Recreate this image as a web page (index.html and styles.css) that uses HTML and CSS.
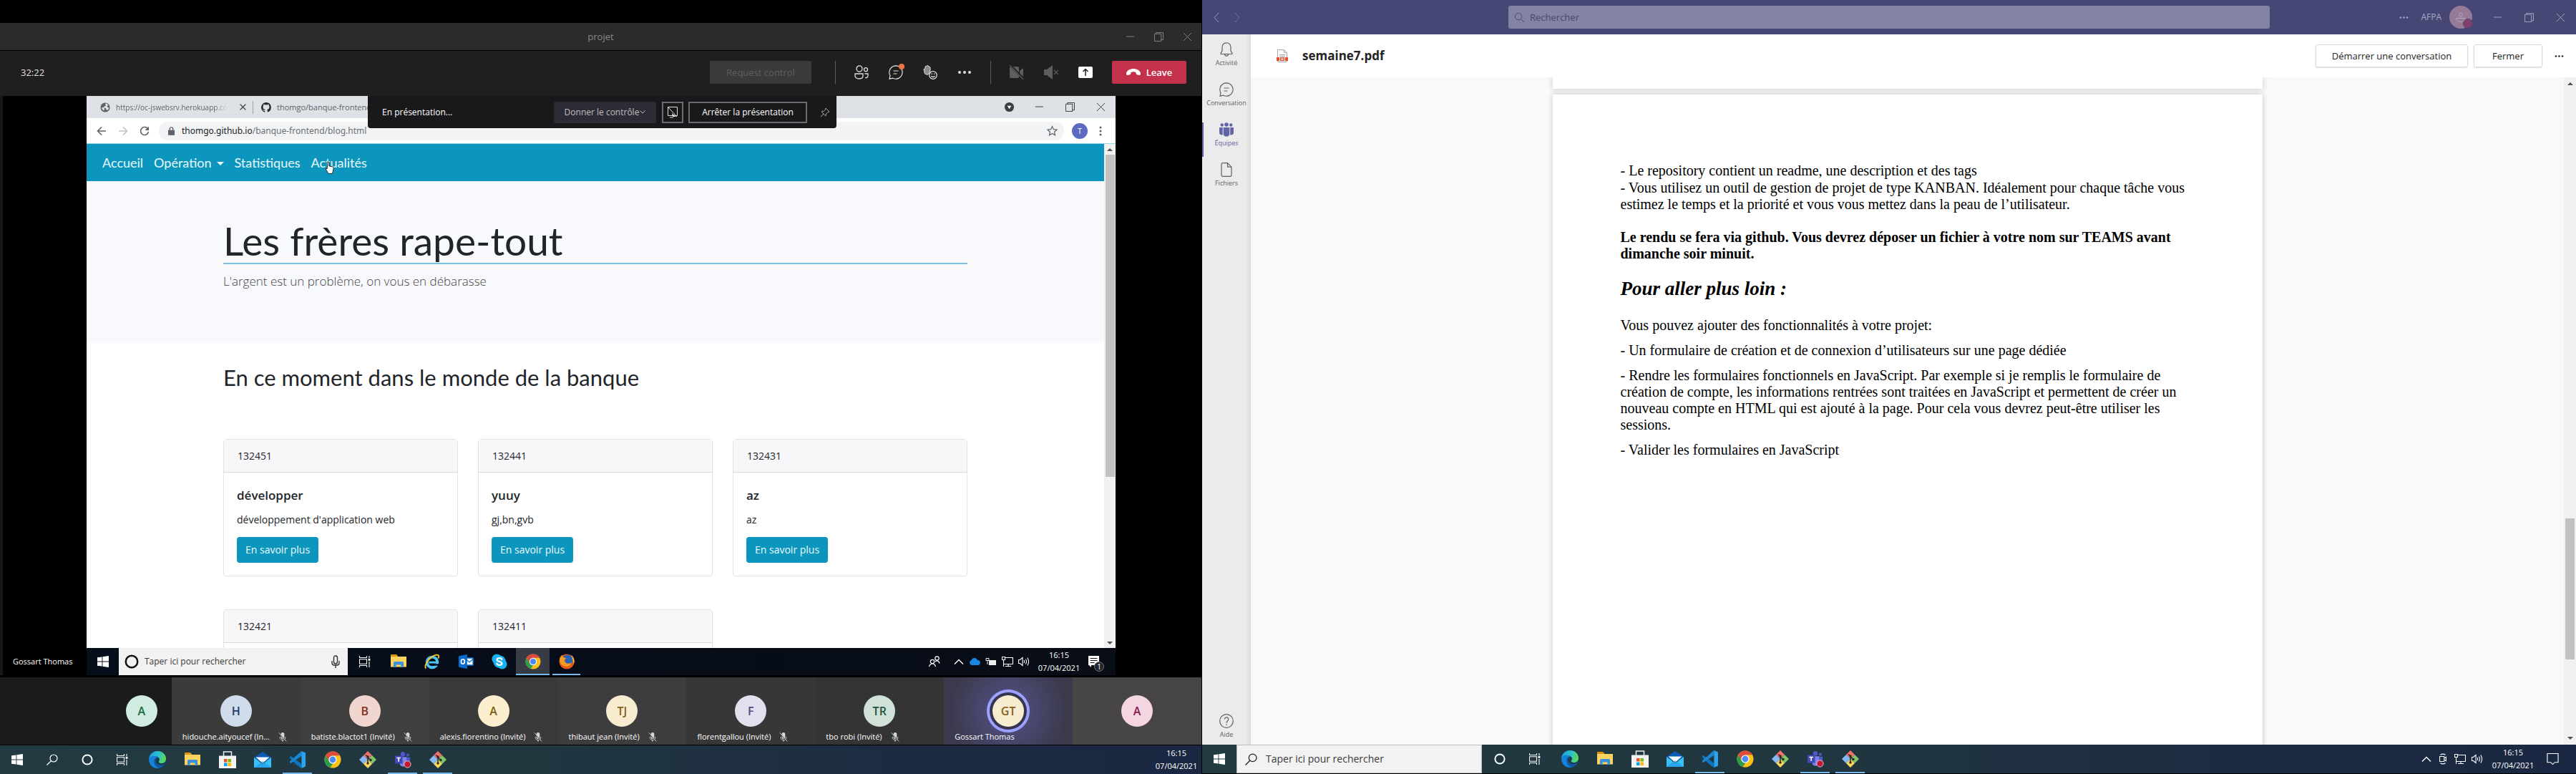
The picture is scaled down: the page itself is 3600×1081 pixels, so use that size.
FILE: index.html
```html
<!DOCTYPE html>
<html lang="fr">
<head>
<meta charset="utf-8">
<title>projet – semaine7.pdf</title>
<link rel="stylesheet" href="styles.css">
</head>
<body>
<svg class="defs" aria-hidden="true">
  <symbol id="i-win" viewBox="0 0 16 16"><path fill="currentColor" d="M0 2.3 6.5 1.4v6.2H0zM7.4 1.2 16 0v7.6H7.4zM0 8.4h6.5v6.2L0 13.7zM7.4 8.4H16V16l-8.6-1.2z"/></symbol>
  <symbol id="i-search" viewBox="0 0 16 16"><circle cx="10" cy="6" r="5" fill="none" stroke="currentColor" stroke-width="1.2"/><path d="M6.4 9.6.5 15.5" stroke="currentColor" stroke-width="1.3"/></symbol>
  <symbol id="i-find" viewBox="0 0 16 16"><circle cx="6.5" cy="6.5" r="5" fill="none" stroke="currentColor"/><path d="M10.2 10.2 15 15" stroke="currentColor"/></symbol>
  <symbol id="i-cortana" viewBox="0 0 16 16"><circle cx="8" cy="8" r="6.6" fill="none" stroke="currentColor" stroke-width="2"/></symbol>
  <symbol id="i-task" viewBox="0 0 16 16"><path fill="none" stroke="currentColor" stroke-width="1.1" d="M.5 0v2.5h10V0M.5 4.8h10v6.4H.5zM.5 16v-2.5h10V16M14 0v3M14 8v8"/><path fill="currentColor" d="M12.6 3.8h2.8v3h-2.8z"/></symbol>
  <symbol id="i-edge" viewBox="0 0 24 24"><defs><linearGradient id="eg" x1="0" x2="1" y1=".2" y2=".4"><stop stop-color="#1b9de2"/><stop offset=".6" stop-color="#2fc2c8"/><stop offset="1" stop-color="#5fdb4b"/></linearGradient></defs><circle cx="12" cy="12" r="12" fill="#0f59a4"/><path fill="url(#eg)" d="M0 11C1 4 6 0 12 0c7 0 12 5 12 10.500 0 4-3 6.500-6.500 6.500-2.500 0-4-1-4-2 0-.8 1.300-1.500 1.300-3.500C14.800 9 12 7 8.500 7 4 7 1 9 0 11z"/><path fill="#1683d8" d="M0 11c1.200-2.800 4.500-4 8.500-4 1.500 0 3 .4 4 1.200C9 8.500 7.200 11 7.200 14c0 4.500 3 8.200 7 9.700C6 25 0 19 0 11z"/><path fill="#213840" d="M12.500 9c1.400.3 2.300 1.400 2.300 2.800 0 1.800-1.300 2.400-1.300 3.200 0 1 1.500 2.200 4 2.200 3 0 4.500-1 5.500-2-1 3-3 4-5.500 4-2.500 0-8-.5-8-6 0-2 1.300-3.800 3-4.200z"/></symbol>
  <symbol id="i-folder" viewBox="0 0 22 20"><path fill="#d9930f" d="M0 0h8l2 2v3H0z"/><path fill="#fbd35f" d="M0 3h22v14.500H0z"/><path fill="#3d8fdb" d="M4 18V11.500q0-1.500 1.500-1.500h11q1.500 0 1.500 1.500V18h-3.500v-3.500h-7V18z"/></symbol>
  <symbol id="i-store" viewBox="0 0 24 24"><path fill="none" stroke="#eee" stroke-width="1.500" d="M6.500 7V1h11v6"/><path fill="#f3f3f3" d="M0 6.500h24V24H0z"/><path fill="#f25022" d="M7 11h4.500v4.500H7z"/><path fill="#7fba00" d="M12.500 11H17v4.500h-4.500z"/><path fill="#00a4ef" d="M7 16.500h4.500V21H7z"/><path fill="#ffb900" d="M12.500 16.500H17V21h-4.500z"/></symbol>
  <symbol id="i-mail" viewBox="0 0 24 22"><path fill="#0b5cb8" d="M0 8 12 0l12 8v5H0z"/><path fill="#37c2f7" d="M0 8v14h24V8L12 17z"/><path fill="#f4f9fd" d="M2.500 7.500h19L12 16z"/><path fill="#1c93e6" d="M0 22 12 13l12 9z" opacity=".6"/></symbol>
  <symbol id="i-code" viewBox="0 0 24 24"><path fill="#0d74bd" d="m17.500 0-11 10L2.500 7 1 7.800v2l8.500 8.700L17.500 24z"/><path fill="#213840" d="M9.500 12 17.500 6v12z"/><path fill="#1b87d3" d="M2.500 17 1 16.200v-2L17.500 0v6.800z"/><path fill="#2aa4ef" d="M17.500 0 23 2.600v18.800L17.500 24z"/></symbol>
  <symbol id="i-chrome" viewBox="0 0 24 24"><circle cx="12" cy="12" r="11.500" fill="#fbc116"/><path fill="#dd4b3e" d="M12 6.300 7 15 2 6.300A11.500 11.500 0 0 1 12 .5a11.500 11.500 0 0 1 10 5.800z"/><path fill="#2d9c4c" d="M2 6.300 7.200 15l5 2.800-3.700 5.200A11.500 11.500 0 0 1 2 6.300z"/><circle cx="12" cy="12" r="5.600" fill="#fff"/><circle cx="12" cy="12" r="4.400" fill="#4a8af4"/></symbol>
  <symbol id="i-git" viewBox="0 0 24 24"><path fill="#f0706c" d="m12 0 6 6-6 6-6-6z"/><path fill="#86b8f6" d="m6 6 6 6-6 6-6-6z"/><path fill="#80c866" d="m18 6 6 6-6 6-6-6z"/><path fill="#fbd75b" d="m12 12 6 6-6 6-6-6z"/><path stroke="#2b2b2b" stroke-width="1.500" fill="none" d="M9 5.500 12 8v9M12 9l4 3.500"/><g fill="#2b2b2b"><circle cx="12" cy="8" r="1.700"/><circle cx="16" cy="12.500" r="1.700"/><circle cx="12" cy="17" r="1.700"/></g></symbol>
  <symbol id="i-teams" viewBox="0 0 26 24"><circle cx="13" cy="3.500" r="3.500" fill="#5059c9"/><circle cx="20.500" cy="5" r="2.500" fill="#4a50b5"/><path fill="#7b83eb" d="M8 8h11v9a5.500 5.500 0 0 1-11 0z"/><path fill="#5059c9" d="M19 8.500h5V16a4 4 0 0 1-5 3z"/><path fill="#4248b5" d="M1 6h11.500v12H1z"/><path fill="#fff" d="M3.700 8.500h6v1.600H7.600V15H5.800v-4.900H3.700z"/><circle cx="20" cy="19" r="5" fill="#c4152f" stroke="#f3d3d8"/></symbol>
  <symbol id="i-ie" viewBox="0 0 24 24"><circle cx="12" cy="13" r="8" fill="none" stroke="#4cc3f2" stroke-width="4.200"/><path fill="#06101c" d="M14 15.500h9v3l-9-.4z"/><path stroke="#4cc3f2" stroke-width="3.200" d="M7 13.200h14.800"/><path fill="none" stroke="#f6c930" stroke-width="2" d="M2.500 22.500C-.5 19 4.500 9.500 12 4.500c5-3.200 9.500-3.700 10-1.200.3 1-.2 2.500-1 3.700"/></symbol>
  <symbol id="i-outlook" viewBox="0 0 24 24"><path fill="#fff" stroke="#0a6cc9" stroke-width="1.500" d="M12 6.500h11v11H12z"/><path fill="none" stroke="#0a6cc9" stroke-width="1.500" d="m12 8 5.500 5L23 8"/><path fill="#0a6cc9" d="M1 3.500 14 1v22L1 20.500z"/><ellipse cx="7.500" cy="12" rx="2.700" ry="3.500" fill="none" stroke="#fff" stroke-width="1.800"/></symbol>
  <symbol id="i-skype" viewBox="0 0 24 24"><circle cx="8" cy="8" r="7.500" fill="#18b1f3"/><circle cx="16" cy="16" r="7.500" fill="#18b1f3"/><circle cx="12" cy="12" r="9.500" fill="#18b1f3"/><path fill="none" stroke="#fff" stroke-width="2.500" stroke-linecap="round" d="M15.700 8.500C14.500 6 8.300 6 8.300 9.200c0 3.500 7.400 2 7.400 5.600 0 3.400-6.400 3.400-7.600.4"/></symbol>
  <symbol id="i-firefox" viewBox="0 0 24 24"><circle cx="12" cy="12" r="11.500" fill="#e8571a"/><circle cx="13" cy="9.500" r="8" fill="#2a62b8"/><path fill="#f39a1f" d="M1 8c1-3 2.500-5 4.500-6-.4 1.500.3 3 1.500 3.500 2 .3 3.500.8 4 2.500-2 .2-2.500 1.500-2 3.500 1 3.500 6 4.500 10 2-1 4-4 6-8 6C5 19.500 1 14 1 8z"/><path fill="#fbc93a" d="M18 1.500c5 3 7 9 4.500 14.500C22 10 21 6 18 1.500z"/></symbol>
  <symbol id="i-min" viewBox="0 0 14 14"><path stroke="currentColor" d="M1 6.500h12"/></symbol>
  <symbol id="i-max" viewBox="0 0 14 14"><path fill="none" stroke="currentColor" d="M.5 2.500h10v11H.5zM3 2.500v-2h10.500v11h-3"/></symbol>
  <symbol id="i-x" viewBox="0 0 14 14"><path stroke="currentColor" d="m1 1 12 12M13 1 1 13"/></symbol>
  <symbol id="i-people" viewBox="0 0 20 20"><g fill="none" stroke="currentColor" stroke-width="1.300"><ellipse cx="7" cy="5" rx="4" ry="4.200"/><path d="M1 12h11v3c0 5.300-11 5.300-11 0z"/><circle cx="16" cy="6.200" r="2.500"/><path d="M14.500 12H19v2.500c0 2.500-2 3.500-4 3"/></g></symbol>
  <symbol id="i-chat" viewBox="0 0 20 20"><path fill="none" stroke="currentColor" stroke-width="1.200" d="M10 .8a9.200 9.200 0 1 1-4.300 17.400L1 19.200l1-4.700A9.200 9.200 0 0 1 10 .8zM6.500 8h7M6.500 12h5"/></symbol>
  <symbol id="i-hand" viewBox="0 0 20 20"><path fill="#8a8a8a" stroke="currentColor" d="M1 5.500 3 5V2l1.700-.8L6.500.6l1.700 1L10 3v5l-2 4-2 1.500L2.500 12z"/><circle cx="14" cy="14" r="5.300" fill="#1f1f1f" stroke="currentColor" stroke-width="1.300"/><path stroke="currentColor" stroke-width="1.300" fill="none" d="M11.500 15c1 2 4 2 5 0M12.200 11.500v1.500M15.800 11.500v1.500"/></symbol>
  <symbol id="i-dots" viewBox="0 0 20 20"><g fill="currentColor"><circle cx="3" cy="10" r="2"/><circle cx="10" cy="10" r="2"/><circle cx="17" cy="10" r="2"/></g></symbol>
  <symbol id="i-camoff" viewBox="0 0 20 20"><path fill="currentColor" d="M0 4q0-2 2-2h9q2 0 2 2v12q0 2-2 2H2q-2 0-2-2zM14 8l5-4v12l-5-4z"/><path stroke="#1f1f1f" stroke-width="3" d="m1 0 18 19"/><path stroke="currentColor" stroke-width="1.200" d="m0 0 19 20"/></symbol>
  <symbol id="i-spkoff" viewBox="0 0 20 20"><path fill="currentColor" d="M0 6h4l8-6v20l-8-6H0z"/><path stroke="currentColor" stroke-width="1.200" d="m14 7 6 6M20 7l-6 6"/></symbol>
  <symbol id="i-share" viewBox="0 0 20 16"><rect width="20" height="16" rx="2" fill="#fff"/><path stroke="#1f1f1f" stroke-width="1.500" fill="none" d="M10 13V4M6.500 7 10 3.500 13.500 7"/></symbol>
  <symbol id="i-hang" viewBox="0 0 20 10"><path fill="#fff" d="M0 6C1 2 6 0 10 0s9 2 10 6c.3 1.500-.3 3.300-1.800 3l-3.400-.8c-1-.3-1.200-1.200-1.300-3.200-2-.9-5-.9-7 0-.1 2-.3 2.900-1.300 3.200L1.800 9C.3 9.300-.3 7.500 0 6z"/></symbol>
  <symbol id="i-mute" viewBox="0 0 12 14"><path fill="#d8d8d8" d="M3.500 2.500a2.500 2.500 0 0 1 5 0v5a2.500 2.500 0 0 1-5 0z"/><path fill="none" stroke="#d8d8d8" d="M2 6.500v1.500c0 4.500 8 4.500 8 0V6.500M6 11v3"/><path stroke="#222" stroke-width="1.500" d="m1 1.500 10 12"/><path stroke="#eee" d="m.5.5 11 13"/></symbol>
  <symbol id="i-up" viewBox="0 0 14 8"><path fill="none" stroke="currentColor" stroke-width="1.400" d="m1 7.500 6-6 6 6"/></symbol>
  <symbol id="i-net" viewBox="0 0 16 16"><path fill="none" stroke="currentColor" stroke-width="1.100" d="M.5 1.500h4v4h-4zM4.500 2.500h11v9H2.500v-6M2.500 5v10M5 14.500h8M9 11.500v3"/></symbol>
  <symbol id="i-sound" viewBox="0 0 16 16"><path fill="none" stroke="currentColor" stroke-width="1.100" d="M.5 5.500h2L6 2.500v11L2.500 10.500h-2zM8 6q1.200 2 0 4M10.300 4.500q2.400 3.500 0 7M12.800 2.500q3.600 5.500 0 11"/></symbol>
  <symbol id="i-meet" viewBox="0 0 12 18"><path fill="none" stroke="currentColor" stroke-width="1.200" d="M1 5h7v8H1zM8 8l3-2v6L8 10M2 2.500q4-2.500 8 0M2 15.500q4 2.500 8 0"/></symbol>
  <symbol id="i-note" viewBox="0 0 18 18"><path fill="none" stroke="currentColor" stroke-width="1.200" d="M1 1h16v13h-5l-3 3-3-3H1z"/></symbol>
  <symbol id="i-pin" viewBox="0 0 14 14"><path fill="none" stroke="currentColor" d="m8 1 5 5-2 .5L8.500 9 8 12 2 6l3-.5L7.500 3zM5 9l-4 4"/></symbol>
</svg>

<main class="desk">
<section class="screen left">
  <div class="blank"></div>
  <header class="call-title">
    <span></span><span>projet</span>
    <div class="winbtns dim">
      <button aria-label="Réduire"><svg><use href="#i-min"/></svg></button>
      <button aria-label="Restaurer"><svg><use href="#i-max"/></svg></button>
      <button aria-label="Fermer"><svg><use href="#i-x"/></svg></button>
    </div>
  </header>
  <div class="call-bar">
    <span class="timer">32:22</span>
    <button class="request" disabled>Request control</button>
    <div class="tools">
      <button aria-label="Participants"><svg><use href="#i-people"/></svg></button>
      <button aria-label="Conversation" class="has-dot"><svg><use href="#i-chat"/></svg></button>
      <button aria-label="Réactions"><svg><use href="#i-hand"/></svg></button>
      <button aria-label="Plus"><svg><use href="#i-dots"/></svg></button>
    </div>
    <div class="tools media">
      <button aria-label="Caméra"><svg><use href="#i-camoff"/></svg></button>
      <button aria-label="Son"><svg><use href="#i-spkoff"/></svg></button>
      <button aria-label="Partager" class="share"><svg><use href="#i-share"/></svg></button>
    </div>
    <button class="leave"><svg><use href="#i-hang"/></svg>Leave</button>
  </div>

  <div class="stage">
    <span class="presenter">Gossart Thomas</span>
    <div class="shared">
      <div class="tabs">
        <div class="tab first"><svg viewBox="0 0 16 16"><circle cx="8" cy="8" r="7.500" fill="#5f6368"/><path fill="#dee1e6" d="M2 8q1 4 4 5l1-3-2-2 2-1.500L9 5 8 3l1.500-1.500L13 4l-2 2 1 2 2 .5-1 3-3 1-1-3.500z"/></svg><span class="fade">https://oc-jswebsrv.herokuapp.co</span><button aria-label="Fermer l’onglet"><svg><use href="#i-x"/></svg></button></div>
        <div class="tab second"><svg viewBox="0 0 16 16"><path fill="#24292e" d="M8 0a8 8 0 0 0-2.500 15.600c.4 0 .5-.2.500-.4v-1.500c-2.200.5-2.700-1-2.700-1-.4-1-1-1.200-1-1.200-.7-.5.1-.5.1-.5.800.1 1.200.8 1.200.8.700 1.200 1.900.9 2.400.7 0-.5.300-.9.500-1.100-1.800-.2-3.600-.9-3.600-4 0-.9.300-1.600.8-2.200 0-.2-.4-1 .1-2.100 0 0 .7-.2 2.200.8a7.500 7.500 0 0 1 4 0c1.500-1 2.200-.8 2.200-.8.400 1.100.1 1.900.1 2.100.5.600.8 1.300.8 2.200 0 3.100-1.900 3.800-3.700 4 .3.200.6.700.6 1.500v2.200c0 .2.100.5.600.4A8 8 0 0 0 8 0z"/></svg><span>thomgo/banque-frontend</span></div>
        <div class="tab-end">
          <svg class="drop" viewBox="0 0 16 16"><circle cx="8" cy="8" r="7" fill="#3c4043"/><path fill="#fff" d="M5 6h6l-3 5z"/></svg>
          <svg><use href="#i-min"/></svg><svg><use href="#i-max"/></svg><svg><use href="#i-x"/></svg>
        </div>
      </div>
      <div class="urlbar">
        <svg viewBox="0 0 14 14"><path fill="none" stroke="#5f6368" stroke-width="1.600" d="M13 7H2M7 1.500 1.500 7 7 12.500"/></svg>
        <svg viewBox="0 0 14 14"><path fill="none" stroke="#c0c2c5" stroke-width="1.600" d="M1 7h11M7 1.500 12.500 7 7 12.500"/></svg>
        <svg viewBox="0 0 14 14"><path fill="none" stroke="#5f6368" stroke-width="1.600" d="M12 4.500A5.500 5.500 0 1 0 12.500 8"/><path fill="#5f6368" d="M13 .5V6H7.500z"/></svg>
        <div class="url"><svg viewBox="0 0 10 13"><path fill="#5f6368" d="M0 5h10v8H0z"/><path fill="none" stroke="#5f6368" stroke-width="1.500" d="M2.500 5V3q0-2.200 2.500-2.200T7.500 3v2"/></svg><span>thomgo.github.io<i>/banque-frontend/blog.html</i></span><svg class="star" viewBox="0 0 16 16"><path fill="none" stroke="#5f6368" stroke-width="1.300" d="m8 1.500 2 4.500 5 .5-3.700 3.300 1 4.900L8 12.200l-4.300 2.500 1-4.900L1 6.500 6 6z"/></svg></div>
        <span class="me">T</span>
        <svg class="kebab" viewBox="0 0 14 14"><g fill="#5f6368"><circle cx="7" cy="2" r="1.500"/><circle cx="7" cy="7" r="1.500"/><circle cx="7" cy="12" r="1.500"/></g></svg>
      </div>
      <div class="viewport">
        <div class="page">
          <nav class="nav"><a href="#">Accueil</a><a href="#" class="dd">Opération</a><a href="#">Statistiques</a><a href="#">Actualités</a></nav>
          <div class="hero"><div class="wrap"><h1>Les frères rape-tout</h1><p>L'argent est un problème, on vous en débarasse</p></div></div>
          <div class="wrap">
            <h2>En ce moment dans le monde de la banque</h2>
            <div class="cards">
              <article class="card"><header>132451</header><div><h3>développer</h3><p>développement d'application web</p><button>En savoir plus</button></div></article>
              <article class="card"><header>132441</header><div><h3>yuuy</h3><p>gj,bn,gvb</p><button>En savoir plus</button></div></article>
              <article class="card"><header>132431</header><div><h3>az</h3><p>az</p><button>En savoir plus</button></div></article>
              <article class="card tall"><header>132421</header></article>
              <article class="card tall"><header>132411</header></article>
            </div>
          </div>
        </div>
        <div class="scroll inner"><i class="au"></i><b></b><i class="ad"></i></div>
      </div>
      <div class="taskbar guest">
        <button aria-label="Démarrer"><svg><use href="#i-win"/></svg></button>
        <label class="box"><svg class="ring"><use href="#i-cortana"/></svg><input type="text" aria-label="Rechercher" placeholder="Taper ici pour rechercher"><svg class="mic" viewBox="0 0 12 18"><path fill="none" stroke="#333" stroke-width="1.400" d="M3.500 3.500q0-2.500 2.500-2.500t2.500 2.500v6q0 2.500-2.500 2.500T3.500 9.500zM1 8v3q0 3 3 3h4q3 0 3-3V8M6 14v4"/></svg></label>
        <button aria-label="Vue des tâches"><svg><use href="#i-task"/></svg></button>
        <button aria-label="Explorateur"><svg class="lg"><use href="#i-folder"/></svg></button>
        <button aria-label="Internet Explorer"><svg class="lg"><use href="#i-ie"/></svg></button>
        <button aria-label="Outlook"><svg class="lg"><use href="#i-outlook"/></svg></button>
        <button aria-label="Skype"><svg class="lg"><use href="#i-skype"/></svg></button>
        <button aria-label="Chrome" class="on active"><svg class="lg"><use href="#i-chrome"/></svg></button>
        <button aria-label="Firefox" class="on"><svg class="lg"><use href="#i-firefox"/></svg></button>
        <div class="tray">
          <svg class="contact" viewBox="0 0 16 16"><g fill="none" stroke="currentColor" stroke-width="1.200"><circle cx="11.500" cy="3.500" r="2.700"/><circle cx="5" cy="8" r="2.700"/><path d="M.5 15q1-4 4.500-4t4.500 4M9 8q4.500-3 6 2.500"/></g></svg>
          <svg class="up"><use href="#i-up"/></svg>
          <svg viewBox="0 0 16 16"><path fill="#1a86e0" d="M4 13a3.500 3.500 0 0 1-.5-6.800A4.500 4.500 0 0 1 12 6a3.500 3.500 0 0 1 .5 7z"/></svg>
          <svg viewBox="0 0 16 16"><path fill="#eee" d="M5 6h10v7H5z"/><path fill="none" stroke="#eee" d="M1 3.500h4v3H1zM3 6.500V12"/></svg>
          <svg><use href="#i-net"/></svg><svg><use href="#i-sound"/></svg>
          <time>16:15<br>07/04/2021</time>
          <span class="notif"><svg viewBox="0 0 16 16"><path fill="#fff" d="M0 0h15v13H4v3l-3-3H0z"/><path stroke="#111" d="M2.500 3.500h10M2.500 6.500h10M2.500 9.500h6"/></svg><em>1</em></span>
        </div>
      </div>
      <div class="presbar">
        <span>En présentation...</span>
        <button class="give">Donner le contrôle<svg viewBox="0 0 8 5"><path fill="none" stroke="currentColor" d="m.5.5 3.500 3.500L7.500.5"/></svg></button>
        <button class="frame" aria-label="Masquer l’écran"><svg viewBox="0 0 16 16"><path fill="none" stroke="#ddd" d="M1.500.5h13v12h-13zM2 1l12 13M4 15h5"/><path fill="#ddd" d="m7 9 6 5H8z"/></svg></button>
        <button class="frame stop">Arrêter la présentation</button>
        <svg class="pin"><use href="#i-pin"/></svg>
      </div>
      <svg class="cursor" viewBox="0 0 12 17"><path fill="#fff" stroke="#222" stroke-width=".9" d="M3.500 1q1.500-.8 1.800.5v5l4.500 1q1.700.5 1.500 2.200L10.500 14l-1 2.500h-5L1 10.500q0-1.500 2-.5z"/></svg>
    </div>
  </div>

  <ul class="people">
    <li class="wide"><span class="av" style="color:#1d6b45;background:#d0ebdf">A</span></li>
    <li style="background:#3b3b3b"><span class="av" style="color:#1f3b66;background:#cfdcec">H</span><p>hidouche.aityoucef (In...<svg><use href="#i-mute"/></svg></p></li>
    <li style="background:#3f3f3f"><span class="av" style="color:#7d2f1e;background:#f1d5cf">B</span><p>batiste.blactot1 (Invité)<svg><use href="#i-mute"/></svg></p></li>
    <li style="background:#3a3a3a"><span class="av" style="color:#7d5c12;background:#fcefce">A</span><p>alexis.fiorentino (Invité)<svg><use href="#i-mute"/></svg></p></li>
    <li style="background:#3d3d3d"><span class="av" style="color:#85601a;background:#f7ebd0">TJ</span><p>thibaut jean (Invité)<svg><use href="#i-mute"/></svg></p></li>
    <li style="background:#373737"><span class="av" style="color:#524a7c;background:#e3dfee">F</span><p>florentgallou (Invité)<svg><use href="#i-mute"/></svg></p></li>
    <li style="background:#343434"><span class="av" style="color:#20523a;background:#d0e2d8">TR</span><p>tbo robi (Invité)<svg><use href="#i-mute"/></svg></p></li>
    <li class="speaking"><span class="av" style="color:#85601a;background:#f7ebd0">GT</span><p>Gossart Thomas</p></li>
    <li style="background:#484644"><span class="av" style="color:#8c1a4b;background:#f5d5e1">A</span></li>
  </ul>

  <div class="taskbar host">
    <button aria-label="Démarrer"><svg><use href="#i-win"/></svg></button>
    <button aria-label="Rechercher"><svg><use href="#i-search"/></svg></button>
    <button aria-label="Cortana"><svg><use href="#i-cortana"/></svg></button>
    <button aria-label="Vue des tâches"><svg><use href="#i-task"/></svg></button>
    <button aria-label="Edge"><svg class="xl"><use href="#i-edge"/></svg></button>
    <button aria-label="Explorateur"><svg class="lg"><use href="#i-folder"/></svg></button>
    <button aria-label="Store"><svg class="xl"><use href="#i-store"/></svg></button>
    <button aria-label="Courrier"><svg class="xl"><use href="#i-mail"/></svg></button>
    <button aria-label="Visual Studio Code" class="on"><svg class="xl"><use href="#i-code"/></svg></button>
    <button aria-label="Chrome"><svg class="xl"><use href="#i-chrome"/></svg></button>
    <button aria-label="Git"><svg class="xl"><use href="#i-git"/></svg></button>
    <button aria-label="Teams" class="on"><svg class="xl"><use href="#i-teams"/></svg></button>
    <button aria-label="Git" class="on"><svg class="xl"><use href="#i-git"/></svg></button>
    <div class="tray end"><time>16:15<br>07/04/2021</time></div>
  </div>
</section>

<section class="screen right">
  <header class="top">
    <div class="hist"><button aria-label="Précédent"><svg viewBox="0 0 8 14"><path fill="none" stroke="#9c9cc0" d="M7 .5 1 7l6 6.500"/></svg></button><button aria-label="Suivant"><svg viewBox="0 0 8 14"><path fill="none" stroke="#76769f" d="m1 .5 6 6.500-6 6.500"/></svg></button></div>
    <label class="find"><svg><use href="#i-find"/></svg><input type="search" aria-label="Rechercher" placeholder="Rechercher"></label>
    <div class="account">
      <svg class="more"><use href="#i-dots"/></svg><span>AFPA</span>
      <span class="user"><svg viewBox="0 0 16 16"><g fill="none" stroke="#b6a3bd"><circle cx="8" cy="4.500" r="2.500"/><path d="M1.500 9.500h13q-1 5-6.500 5t-6.500-5z"/></g></svg></span>
      <div class="winbtns">
        <button aria-label="Réduire"><svg><use href="#i-min"/></svg></button>
        <button aria-label="Restaurer"><svg><use href="#i-max"/></svg></button>
        <button aria-label="Fermer"><svg><use href="#i-x"/></svg></button>
      </div>
    </div>
  </header>
  <div class="body">
    <nav class="side">
      <a href="#"><svg viewBox="0 0 20 20"><path fill="none" stroke="currentColor" stroke-width="1.200" d="M10 .8c4 0 6 3 6 6.200v5l2 3.500q.3 1-1 1H3q-1.300 0-1-1L4 12V7C4 3.800 6 .8 10 .8zM7.500 16.500c.3 3.500 4.700 3.500 5 0"/></svg>Activité</a>
      <a href="#"><svg><use href="#i-chat"/></svg>Conversation</a>
      <a href="#" class="cur"><svg viewBox="0 0 20 20"><g fill="currentColor"><circle cx="10" cy="3" r="2.800"/><circle cx="3.800" cy="3.500" r="2.200"/><circle cx="16.200" cy="3.500" r="2.200"/><path d="M5.700 7h8.600v9c0 5-8.600 5-8.600 0zM0 7h4.700v10.500Q0 18 0 14zM20 7h-4.700v10.500Q20 18 20 14z"/></g></svg>Équipes</a>
      <a href="#"><svg viewBox="0 0 20 20"><path fill="none" stroke="currentColor" stroke-width="1.200" d="M5 .6h6.500L17 6.200V17.500q0 1.900-2 1.900H5q-2 0-2-1.900v-15Q3 .6 5 .6zM11.500.6v5.600H17"/></svg>Fichiers</a>
      <a href="#" class="help"><svg viewBox="0 0 20 20"><circle cx="10" cy="10" r="9.300" fill="none" stroke="currentColor" stroke-width="1.200"/><path fill="none" stroke="currentColor" stroke-width="1.200" d="M7.500 7.500C7.500 4 12.700 4 12.700 7.500c0 2.500-2.700 2.500-2.700 5.300M10 14.500V16"/></svg>Aide</a>
    </nav>
    <div class="file">
      <header class="file-head">
        <svg class="pdf" viewBox="0 0 16 18"><path fill="#fafafa" stroke="#aaa" d="M1.500.5h9l4 4v13h-13z"/><path fill="none" stroke="#aaa" d="M10.500.5v4h4M4 7.500h8M4 9.500h8"/><path fill="#e2522f" d="M0 11h16v5H0z"/><path fill="#fff" d="M4 11h1v5H4zM11 11h1v5h-1zM6.500 12.500h3v2h-3z"/></svg>
        <h1>semaine7.pdf</h1>
        <button class="btn talk">Démarrer une conversation</button>
        <button class="btn close">Fermer</button>
        <svg class="more"><use href="#i-dots"/></svg>
      </header>
      <div class="viewer">
        <div class="sheets">
          <div class="sheet prev"></div>
          <article class="sheet">
            <p class="tight">- Le repository contient un readme, une description et des tags</p>
            <p>- Vous utilisez un outil de gestion de projet de type KANBAN. Idéalement pour chaque tâche vous estimez le temps et la priorité et vous vous mettez dans la peau de l’utilisateur.</p>
            <p class="due">Le rendu se fera via github. Vous devrez déposer un fichier à votre nom sur TEAMS avant dimanche soir minuit.</p>
            <h2>Pour aller plus loin :</h2>
            <p>Vous pouvez ajouter des fonctionnalités à votre projet:</p>
            <p>- Un formulaire de création et de connexion d’utilisateurs sur une page dédiée</p>
            <p>- Rendre les formulaires fonctionnels en JavaScript. Par exemple si je remplis le formulaire de création de compte, les informations rentrées sont traitées en JavaScript et permettent de créer un nouveau compte en HTML qui est ajouté à la page. Pour cela vous devrez peut-être utiliser les sessions.</p>
            <p>- Valider les formulaires en JavaScript</p>
          </article>
        </div>
        <div class="scroll outer"><i class="au"></i><b></b><i class="ad"></i></div>
      </div>
    </div>
  </div>
  <div class="taskbar host">
    <button aria-label="Démarrer"><svg><use href="#i-win"/></svg></button>
    <label class="box"><svg><use href="#i-search"/></svg><input type="text" aria-label="Rechercher" placeholder="Taper ici pour rechercher"></label>
    <button aria-label="Cortana"><svg><use href="#i-cortana"/></svg></button>
    <button aria-label="Vue des tâches"><svg><use href="#i-task"/></svg></button>
    <button aria-label="Edge"><svg class="xl"><use href="#i-edge"/></svg></button>
    <button aria-label="Explorateur"><svg class="lg"><use href="#i-folder"/></svg></button>
    <button aria-label="Store"><svg class="xl"><use href="#i-store"/></svg></button>
    <button aria-label="Courrier"><svg class="xl"><use href="#i-mail"/></svg></button>
    <button aria-label="Visual Studio Code" class="on"><svg class="xl"><use href="#i-code"/></svg></button>
    <button aria-label="Chrome"><svg class="xl"><use href="#i-chrome"/></svg></button>
    <button aria-label="Git"><svg class="xl"><use href="#i-git"/></svg></button>
    <button aria-label="Teams" class="on"><svg class="xl"><use href="#i-teams"/></svg></button>
    <button aria-label="Git" class="on"><svg class="xl"><use href="#i-git"/></svg></button>
    <div class="tray">
      <svg class="up"><use href="#i-up"/></svg><svg><use href="#i-meet"/></svg><svg><use href="#i-net"/></svg><svg><use href="#i-sound"/></svg>
      <time>16:15<br>07/04/2021</time>
      <svg class="note"><use href="#i-note"/></svg>
    </div>
  </div>
</section>
</main>
</body>
</html>
```
FILE: styles.css
```css
* { box-sizing: border-box; }
body { margin: 0; background: #000; font-family: "Open Sans", sans-serif; font-size: 13px; line-height: 18px; }
h1, h2, h3, p, ul { margin: 0; padding: 0; font-weight: 400; }
button, input { font: inherit; color: inherit; background: none; border: 0; padding: 0; margin: 0; outline: 0; }
a { color: inherit; text-decoration: none; }
svg { display: block; flex: none; width: 16px; height: 16px; overflow: visible; }
.defs { position: absolute; width: 0; height: 0; }

.desk { display: grid; grid-template-columns: 7fr 8fr; height: 100vh; }
.screen { display: flex; flex-direction: column; min-width: 0; min-height: 0; }

/* Call window */
.left { border-right: 1px solid #000; }
.blank { height: 32px; flex: none; }
.call-title { display: grid; grid-template-columns: 1fr auto 1fr; align-items: center; height: 38px; flex: none; background: #2b2b2b; color: #8a8886; font-size: 13px; }
.winbtns { display: flex; justify-content: flex-end; color: #a9a9c6; }
.winbtns button { display: grid; place-items: center; width: 40px; height: 38px; }
.winbtns.dim { color: #8a8886; }
.winbtns svg { width: 13px; height: 13px; }
.call-bar { display: flex; align-items: center; flex: none; height: 63px; margin-top: 1px; padding: 0 21px 3px 29px; background: #1f1f1f; color: #e1dfdd; }
.timer { flex: 1; }
.request { width: 142px; height: 32px; border-radius: 2px; background: #3b3a39; color: #605e5c; }
.tools { display: flex; align-items: center; gap: 8px; height: 32px; margin-left: 33px; padding-left: 16px; border-left: 1px solid #605e5c; color: #e1dfdd; }
.tools button { display: grid; place-items: center; width: 40px; height: 32px; position: relative; }
.tools svg { width: 20px; height: 20px; }
.media { margin-left: 16px; color: #605e5c; }
.has-dot::after { content: ""; position: absolute; top: 4px; right: 8px; width: 8px; height: 8px; border-radius: 50%; background: #e97548; }
.leave { display: flex; align-items: center; justify-content: center; gap: 8px; width: 104px; height: 32px; margin-left: 17px; border-radius: 2px; background: #c4314b; color: #fff; font-weight: 600; }
.leave svg { width: 20px; height: 10px; }

.stage { display: grid; grid-template-columns: 117px minmax(0, 1fr) 120px; flex: 1; min-height: 0; border-left: 4px solid #181818; background: #000; }
.presenter { align-self: end; padding: 0 0 10px 14px; color: #fff; font-size: 11px; white-space: nowrap; }
.shared { position: relative; display: flex; flex-direction: column; min-width: 0; min-height: 0; background: #fff; }

/* Shared browser */
.tabs { display: flex; align-items: center; flex: none; height: 31px; padding: 0 14px 0 19px; background: #dee1e6; color: #5f6368; font-size: 11px; }
.tab { display: flex; align-items: center; gap: 8px; white-space: nowrap; }
.tab > svg { width: 14px; height: 14px; }
.tab button svg { width: 9px; height: 9px; color: #333; stroke-width: 2; }
.first { width: 204px; font-size: 10px; }
.first button { margin-left: auto; }
.fade { mask-image: linear-gradient(90deg, #000 88%, transparent); }
.second { margin-left: 9px; padding-left: 11px; border-left: 1px solid #9aa0a6; }
.tab-end { display: flex; align-items: center; gap: 30px; margin-left: auto; color: #333; }
.tab-end svg { width: 13px; height: 13px; }
.tab-end .drop { width: 15px; height: 15px; margin-right: -2px; }
.urlbar { display: flex; align-items: center; gap: 16px; flex: none; height: 35px; padding: 0 14px; }
.urlbar > svg { width: 14px; height: 14px; }
.url { display: flex; align-items: center; flex: 1; gap: 10px; height: 26px; margin-left: -3px; padding: 0 9px 0 13px; border-radius: 13px; background: #f1f3f4; color: #202124; font-family: "Noto Sans", sans-serif; font-size: 12px; }
.url i { font-style: normal; color: #6b6f74; }
.url svg { width: 9px; height: 12px; }
.url .star { width: 15px; height: 15px; margin-left: auto; }
.me { display: grid; place-items: center; width: 22px; height: 22px; margin: 0 -5px; border-radius: 50%; background: #5c6bc0; color: #fff; font-size: 11px; }
.viewport { display: flex; flex: 1; min-height: 0; border-top: 1px solid #9fd0e2; overflow: hidden; }
.page { flex: 1; min-width: 0; color: #212529; font-size: 14px; line-height: 20px; }
.nav { display: flex; align-items: center; gap: 15px; height: 52px; padding-left: 22px; background: #0d96bd; color: #e8f6fb; font-family: Lato, sans-serif; font-size: 18px; }
.dd::after { content: ""; display: inline-block; margin-left: 7px; vertical-align: 3px; border: 5px solid transparent; border-top-color: currentColor; border-bottom: 0; }
.wrap { max-width: 1040px; margin: 0 auto; }
.hero { padding: 52px 0 74px; background: #f8f9fd; }
.hero h1 { border-bottom: 2px solid #77c4dc; font: 55px/62px Lato, sans-serif; }
.hero p { margin-top: 12px; color: #444; font-size: 17px; line-height: 24px; font-weight: 300; }
.wrap h2 { padding-top: 29px; font: 31px/38px Lato, sans-serif; }
.cards { display: grid; grid-template-columns: repeat(3, 1fr); gap: 46px 28px; margin-top: 67px; }
.card { border: 1px solid #e2e2e4; border-radius: 4px; }
.card header { padding: 13px 19px 12px; border-bottom: 1px solid #d9d9dc; background: #f7f6f9; }
.card div { padding: 20px 18px 18px; }
.card h3 { font-size: 17px; line-height: 24px; font-weight: 600; }
.card p { margin: 12px 0 14px; }
.card button { display: block; height: 36px; padding: 0 12px; border-radius: 4px; background: #0d96bd; color: #eefaff; }
.tall { height: 191px; }

.scroll { display: flex; flex-direction: column; align-items: center; flex: none; background: #f1f1f1; }
.scroll i { flex: none; border: 4px solid transparent; }
.scroll .au { border-top: 0; border-bottom-color: #505050; }
.scroll .ad { margin-top: auto; border-bottom: 0; border-top-color: #505050; }
.scroll b { width: 13px; background: #c1c1c1; }
.inner { width: 16px; padding: 6px 0 5px; }
.inner b { height: 65%; margin-top: 5px; }
.outer { width: 17px; padding: 7px 0; }
.outer b { height: 197px; margin-top: 56vh; }

/* Presenter bar floating over the shared screen */
.presbar { position: absolute; top: 0; left: 393px; display: flex; align-items: center; width: 655px; height: 45px; padding: 0 9px 0 20px; border-radius: 0 0 4px 4px; background: #19181a; color: #fff; font-size: 12px; white-space: nowrap; }
.presbar span { flex: 1; }
.presbar button { display: flex; align-items: center; justify-content: center; height: 30px; }
.presbar .give { gap: 1px; width: 143px; margin-right: 8px; border-radius: 3px; background: #2d2b33; color: #c0bec4; }
.give svg { width: 8px; height: 5px; }
.presbar .frame { width: 30px; border: 2px solid #6d6b70; }
.presbar .stop { width: 166px; margin-left: 7px; }
.pin { width: 14px; height: 14px; margin-left: 18px; color: #a8a6ab; }
.cursor { position: absolute; top: 91px; left: 333px; width: 13px; height: 18px; }

/* Participants */
.people { display: flex; flex: none; height: 94px; margin-top: 3px; background: #1b1b1b; list-style: none; color: #fff; font-size: 11px; }
.people li { display: grid; flex: 3 1 0; min-width: 0; }
.people .wide { flex-grow: 4; }
.people li > * { grid-area: 1 / 1; }
.av { place-self: center; display: grid; place-items: center; width: 44px; height: 44px; border-radius: 50%; font-size: 16px; font-weight: 600; }
.wide .av { justify-self: end; margin-right: 20px; }
.people p { display: flex; align-items: center; gap: 12px; align-self: end; padding: 0 0 2px 15px; line-height: 18px; white-space: nowrap; }
.people p svg { width: 12px; height: 13px; }
.speaking { background: radial-gradient(circle at 50% 50%, #5a588f 0, #4a4870 35px, #3b3a4d 80px); }
.speaking .av { box-shadow: 0 0 0 4px #363550, 0 0 0 8px #9ea2ff; }

/* Task bars */
.taskbar { display: flex; flex: none; height: 40px; color: #fff; }
.host { margin-top: 1px; background: linear-gradient(90deg, #223a41, #21363f 45%, #1c2b42 75%, #1a2742); }
.taskbar button { position: relative; display: grid; place-items: center; width: 49px; }
.taskbar button:first-child { width: 48px; }
.taskbar .lg { width: 22px; height: 22px; }
.taskbar .xl { width: 24px; height: 24px; }
.on::after { content: ""; position: absolute; right: 4px; bottom: 0; left: 4px; height: 2px; background: #76b9ed; }
.box { display: flex; align-items: center; gap: 12px; width: 343px; padding-left: 11px; border: 1px solid #b9bcbe; background: #f2f2f2; color: #222; }
.box svg { width: 17px; height: 17px; }
.box input { flex: 1; min-width: 0; font-size: 14px; }
.box input::placeholder { color: #3a3a3a; opacity: 1; }
.tray { display: flex; align-items: center; gap: 8px; margin-left: auto; padding-right: 24px; font-size: 11px; text-align: center; }
.tray time { width: 62px; margin: 0 3px; line-height: 18px; white-space: nowrap; }
.tray .up { width: 14px; height: 8px; }
.note { width: 17px; height: 18px; margin-left: 5px; }
.end { padding-right: 1px; }
.guest { height: 38px; background: linear-gradient(90deg, #060e1b, #080d16); }
.guest button { width: 47px; }
.guest button:first-child { width: 45px; }
.guest .box { width: 320px; gap: 8px; padding: 0 11px 0 8px; border: 0; }
.guest .box input { font-size: 12px; }
.guest .ring { width: 20px; height: 20px; color: #111; }
.guest .mic { width: 12px; height: 18px; }
.guest .active { background: #373b46; }
.guest .active::after { right: 0; left: 0; }
.guest .tray { gap: 7px; padding-right: 22px; font-size: 11px; }
.guest .contact { margin-right: 12px; }
.notif { position: relative; }
.notif em { position: absolute; top: 8px; left: 8px; width: 14px; height: 14px; border: 1px solid #777; border-radius: 50%; background: #23262c; font: 10px/12px "Open Sans", sans-serif; }

/* File window */
.top { display: grid; grid-template-columns: 1fr minmax(0, 1064px) 1fr; align-items: center; flex: none; height: 48px; background: #464775; }
.hist { display: flex; gap: 21px; padding-left: 16px; }
.hist svg { width: 8px; height: 17px; }
.find { display: flex; align-items: center; gap: 7px; height: 32px; padding-left: 8px; border-radius: 3px; background: #8383a3; color: #464775; }
.find svg { width: 15px; height: 15px; }
.find input { flex: 1; }
.find input::placeholder { color: #464775; opacity: 1; }
.account { display: flex; align-items: center; justify-content: flex-end; color: #a9a9c6; }
.more { width: 13px; height: 13px; }
.account > span { margin-left: 17px; font-size: 12px; }
.account .user { position: relative; display: grid; place-items: center; width: 32px; height: 32px; margin: 0 13px 0 11px; border-radius: 50%; background: #967b99; }
.user::after { content: ""; position: absolute; right: -1px; bottom: 0; width: 12px; height: 12px; border: 1px solid #464775; border-radius: 50%; background: #82406d; }
.account .winbtns button { width: 44px; }
.body { display: flex; flex: 1; min-height: 0; }
.side { display: flex; flex-direction: column; flex: none; width: 68px; padding: 11px 0 7px; background: linear-gradient(90deg, #ebebeb 90%, #dcdcdc); color: #616161; font-size: 9px; line-height: 12px; }
.side a { display: flex; flex-direction: column; align-items: center; gap: 3px; height: 56px; }
.side svg { width: 20px; height: 20px; }
.side .cur { color: #6264a7; box-shadow: inset 2px 0 #6264a7; }
.side .cur { height: 48px; margin-bottom: 8px; }
.side .help { height: 36px; margin-top: auto; }
.file { display: flex; flex-direction: column; flex: 1; min-width: 0; }
.file-head { display: flex; align-items: center; flex: none; height: 60px; padding: 0 17px 0 36px; background: #fff; color: #252423; }
.pdf { width: 16px; height: 18px; }
.file-head h1 { flex: 1; padding-left: 20px; font-size: 17px; font-weight: 700; }
.btn { height: 32px; border: 1px solid #dcdad8; border-radius: 3px; box-shadow: 0 1px 2px #0002; }
.talk { width: 213px; }
.close { width: 96px; margin: 0 17px 0 8px; }
.viewer { display: flex; flex: 1; min-height: 0; background: #faf9f8; overflow: hidden; }
.sheets { flex: 1; overflow: hidden; }
.sheet { max-width: 992px; min-height: 1400px; margin: 0 auto; padding: 95px; background: #fff; box-shadow: 0 0 8px #0003; color: #000; font-family: "Liberation Serif", serif; font-size: 20px; line-height: 23px; }
.sheet.prev { min-height: 0; height: 16px; margin-bottom: 8px; padding: 0; }
.sheet p { margin-bottom: 12px; }
.sheet .tight { margin-bottom: 1px; }
.sheet .due { margin: 23px 0 21px; font-weight: 700; }
.sheet h2 { margin-bottom: 24px; font-size: 27px; line-height: 32px; font-weight: 700; font-style: italic; }
.right .host { margin: 0 0 1px; }
```
